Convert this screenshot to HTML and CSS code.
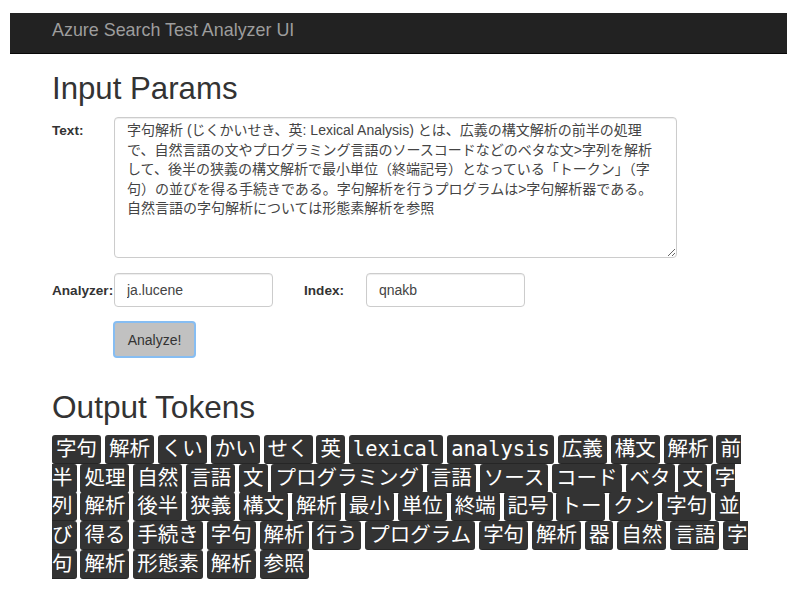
FILE: index.html
```html
<!DOCTYPE html>
<html lang="ja">
<head>
<meta charset="utf-8">
<title>Azure Search Test Analyzer UI</title>
<link rel="stylesheet" href="styles.css">
</head>
<body>
<div class="frame">
  <nav class="navbar"><span class="brand">Azure Search Test Analyzer UI</span></nav>
  <main class="main">
    <h1 class="title title-in">Input Params</h1>
    <form class="form">
      <div class="row">
        <label class="lbl lbl-text">Text:</label>
        <textarea class="ta">字句解析 (じくかいせき、英: Lexical Analysis) とは、広義の構文解析の前半の処理で、自然言語の文やプログラミング言語のソースコードなどのベタな文&gt;字列を解析して、後半の狭義の構文解析で最小単位（終端記号）となっている「トークン」（字句）の並びを得る手続きである。字句解析を行うプログラムは&gt;字句解析器である。自然言語の字句解析については形態素解析を参照</textarea>
      </div>
      <div class="row row-inputs">
        <label class="lbl lbl-inline">Analyzer:</label>
        <input class="inp" type="text" value="ja.lucene">
        <label class="lbl lbl-inline lbl-index">Index:</label>
        <input class="inp" type="text" value="qnakb">
      </div>
      <div class="row row-btn">
        <button class="btn" type="button">Analyze!</button>
      </div>
    </form>
    <h2 class="title title-out">Output Tokens</h2>
    <div class="tokens"><kbd>字句</kbd> <kbd>解析</kbd> <kbd>くい</kbd> <kbd>かい</kbd> <kbd>せく</kbd> <kbd>英</kbd> <kbd>lexical</kbd> <kbd>analysis</kbd> <kbd>広義</kbd> <kbd>構文</kbd> <kbd>解析</kbd> <kbd>前半</kbd> <kbd>処理</kbd> <kbd>自然</kbd> <kbd>言語</kbd> <kbd>文</kbd> <kbd>プログラミング</kbd> <kbd>言語</kbd> <kbd>ソース</kbd> <kbd>コード</kbd> <kbd>ベタ</kbd> <kbd>文</kbd> <kbd>字列</kbd> <kbd>解析</kbd> <kbd>後半</kbd> <kbd>狭義</kbd> <kbd>構文</kbd> <kbd>解析</kbd> <kbd>最小</kbd> <kbd>単位</kbd> <kbd>終端</kbd> <kbd>記号</kbd> <kbd>トー</kbd> <kbd>クン</kbd> <kbd>字句</kbd> <kbd>並び</kbd> <kbd>得る</kbd> <kbd>手続き</kbd> <kbd>字句</kbd> <kbd>解析</kbd> <kbd>行う</kbd> <kbd>プログラム</kbd> <kbd>字句</kbd> <kbd>解析</kbd> <kbd>器</kbd> <kbd>自然</kbd> <kbd>言語</kbd> <kbd>字句</kbd> <kbd>解析</kbd> <kbd>形態素</kbd> <kbd>解析</kbd> <kbd>参照</kbd></div>
  </main>
</div>
</body>
</html>
```

FILE: styles.css
```css
* {
  box-sizing: border-box;
}

body {
  margin: 0;
  background: #fff;
  font-family: "Liberation Sans", Arial, "Noto Sans CJK JP", sans-serif;
  font-size: 14px;
  color: #333;
}

.frame {
  padding: 13px 12px 0 10px;
}

.navbar {
  height: 41px;
  background: #222;
  border-bottom: 1px solid #080808;
  padding: 7.4px 0 0 42px;
}

.brand {
  display: block;
  color: #9d9d9d;
  font-size: 17.9px;
  line-height: 20px;
}

.main {
  padding-left: 42px;
}

.title {
  font-weight: normal;
  line-height: 1.1;
  color: #333;
}

.title-in {
  font-size: 31.2px;
  margin: 18.2px 0 10.5px;
}

.row {
  display: flex;
  align-items: flex-start;
}

.lbl {
  flex: none;
  width: 62px;
  font-weight: bold;
  font-size: 13.6px;
  line-height: 20px;
  color: #333;
}

.lbl-text {
  padding-top: 4px;
}

.ta {
  display: block;
  width: 563px;
  height: 141px;
  margin: 0;
  border: 1px solid #ccc;
  border-radius: 4px;
  padding: 3px 12px 6px;
  font-family: "Liberation Sans", Arial, "Noto Sans CJK JP", sans-serif;
  font-size: 14px;
  line-height: 19.5px;
  color: #444;
  background: #fff;
  box-shadow: inset 0 1px 1px rgba(0, 0, 0, 0.075);
}

.row-inputs {
  margin-top: 15px;
}

.lbl-inline {
  padding-top: 8px;
}

.lbl-index {
  margin-left: 31px;
}

.inp {
  flex: none;
  width: 159px;
  height: 34px;
  margin: 0;
  border: 1px solid #ccc;
  border-radius: 4px;
  padding: 6px 12px;
  font-family: "Liberation Sans", Arial, sans-serif;
  font-size: 14px;
  color: #444;
  background: #fff;
  box-shadow: inset 0 1px 1px rgba(0, 0, 0, 0.075);
}

.row-btn {
  margin-top: 14px;
  padding-left: 61px;
}

.btn {
  width: 83px;
  height: 37px;
  margin: 0;
  padding: 0;
  background: #c1c1c1;
  border: 2px solid #86bdf2;
  border-radius: 4px;
  font-family: "Liberation Sans", Arial, sans-serif;
  font-size: 14px;
  color: #333;
}

.title-out {
  font-size: 31.6px;
  margin: 32.2px 0 10.5px;
}

.tokens {
  width: 703px;
  font-size: 14px;
  line-height: 28.7px;
}

.tokens kbd {
  vertical-align: top;
  font-family: "DejaVu Sans Mono", "Noto Sans CJK JP", monospace;
  font-size: 20.5px;
  line-height: 28.7px;
  padding: 2.4px 4px;
  color: #fff;
  background: #333;
  border-radius: 3px;
  box-shadow: inset 0 -1px 0 rgba(0, 0, 0, 0.25);
}
```
